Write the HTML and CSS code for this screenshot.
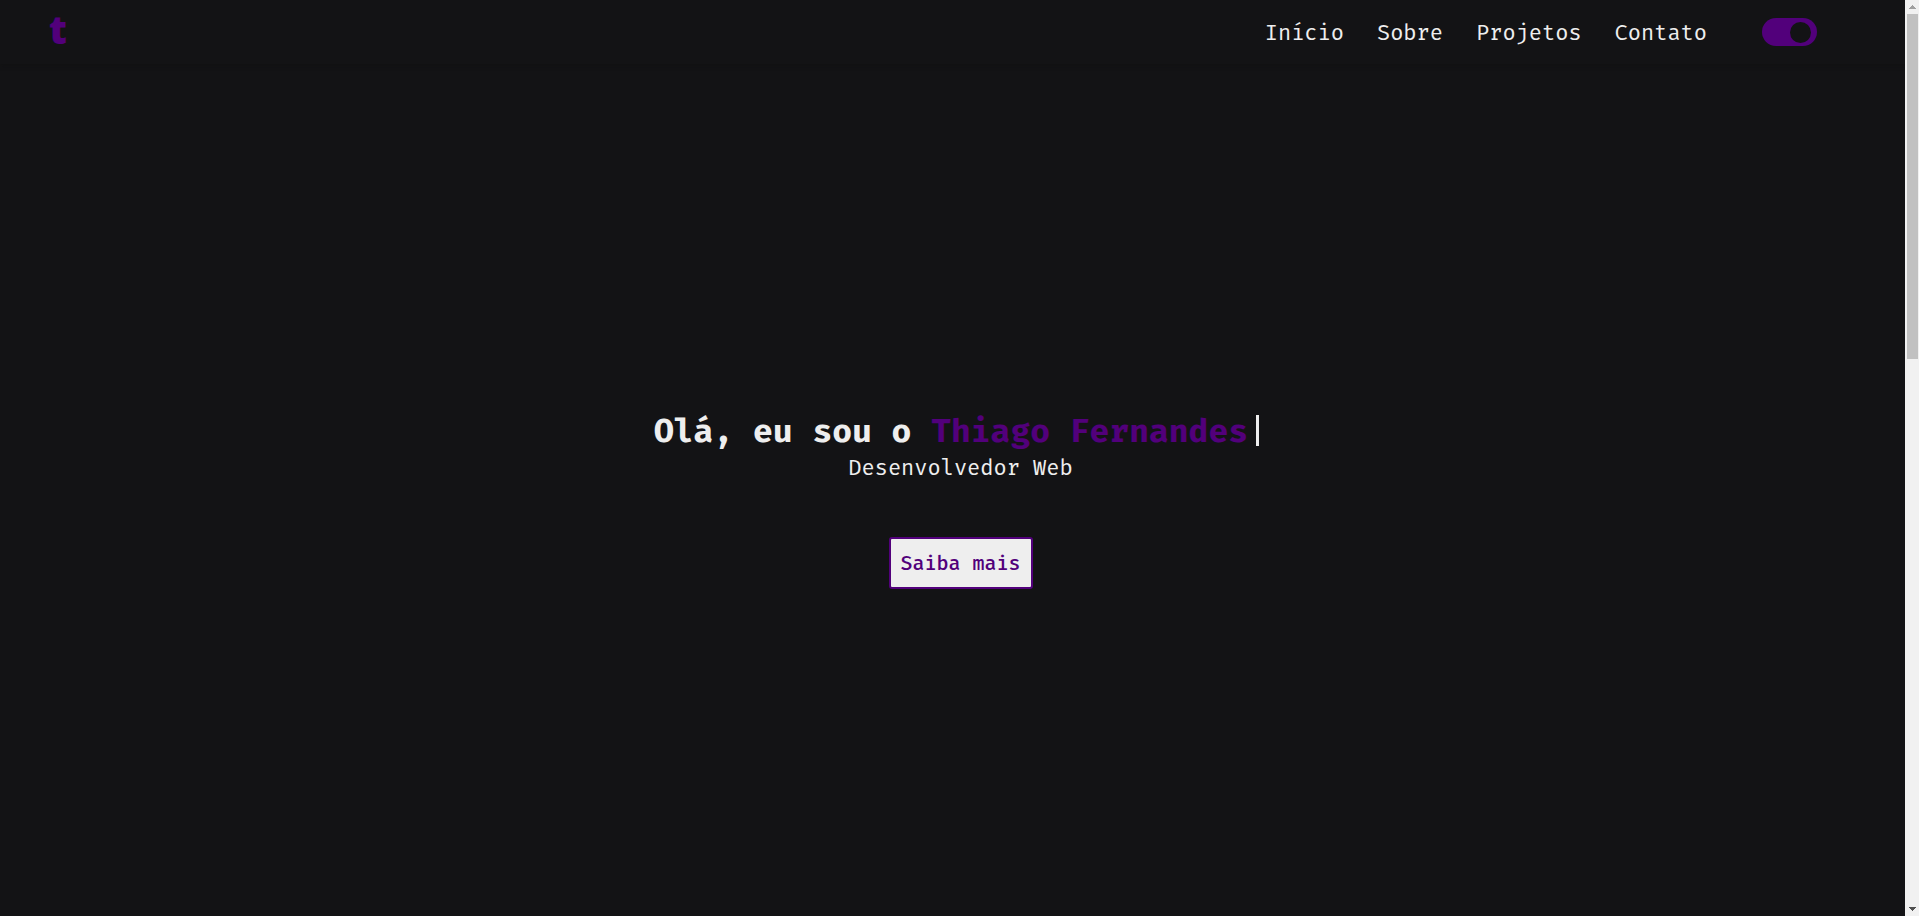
FILE: index.html
```html
<!DOCTYPE html>
<html lang="pt-BR">
<head>
<meta charset="utf-8">
<title>Thiago Fernandes</title>
<link rel="stylesheet" href="styles.css">
</head>
<body>
<header class="navbar">
  <a class="logo" href="#inicio">t</a>
  <nav class="links">
    <a href="#inicio">Início</a>
    <a href="#sobre">Sobre</a>
    <a href="#projetos">Projetos</a>
    <a href="#contato">Contato</a>
  </nav>
  <input class="toggle" type="checkbox" checked aria-label="Tema escuro">
</header>
<main class="hero" id="inicio">
  <h1 class="title"><span>Olá, eu sou o <span class="name">Thiago Fernandes</span></span><span class="cursor"></span></h1>
  <p class="role">Desenvolvedor Web</p>
  <button class="more" type="button">Saiba mais</button>
</main>
<div class="scrollbar" aria-hidden="true">
  <svg class="arrow dim" viewBox="0 0 7 4"><path d="M3 0h1v1h1v1h1v1h1v1H0V3h1V2h1V1h1z"/></svg>
  <div class="thumb"></div>
  <svg class="arrow" viewBox="0 0 7 4"><path d="M0 0h7v1H6v1H5v1H4v1H3V3H2V2H1V1H0z"/></svg>
</div>
</body>
</html>
```
FILE: styles.css
```css
* { box-sizing: border-box; margin: 0; }
body {
  min-height: 100vh;
  display: flex;
  flex-direction: column;
  background: #131315;
  color: #eee;
  font-family: "Fira Mono", "DejaVu Sans Mono", monospace;
  overflow: hidden;
}
a { color: inherit; text-decoration: none; }
.navbar {
  display: flex;
  align-items: center;
  height: 64px;
  padding: 0 102px 0 49px;
  box-shadow: 0 1px 4px #111112;
}
.logo {
  color: #52007b;
  font-family: "Open Sans", sans-serif;
  font-size: 39px;
  line-height: 44px;
  font-weight: 800;
  margin-bottom: 6px;
}
.links {
  display: flex;
  gap: 33px;
  margin: 2px 55px 0 auto;
  font-size: 22px;
  line-height: 30px;
}
.toggle {
  appearance: none;
  display: flex;
  justify-content: flex-end;
  align-items: center;
  width: 55px;
  height: 28px;
  padding: 0 6px;
  border-radius: 14px;
  background: #52007b;
}
.toggle::before {
  content: "";
  width: 21px;
  height: 21px;
  border-radius: 50%;
  background: #131315;
}
.hero {
  flex: 1;
  display: flex;
  flex-direction: column;
  align-items: center;
  justify-content: center;
  padding: 20px 0 0 2px;
}
.title {
  display: flex;
  align-items: center;
  gap: 8px;
  padding-right: 8px;
  font-size: 33px;
  line-height: 40px;
}
.name { color: #52007b; }
.cursor { width: 3px; height: 31px; margin-bottom: 2px; background: #eee; }
.role { font-size: 22px; line-height: 34px; }
.more {
  height: 52px;
  margin-top: 52px;
  padding: 0 10px;
  border: 2px solid #52007b;
  border-radius: 3px;
  background: #eee;
  color: #52007b;
  font: 500 20px/28px "Fira Mono", "DejaVu Sans Mono", monospace;
}
.scrollbar {
  position: fixed;
  top: 0;
  right: 0;
  bottom: 0;
  width: 14px;
  padding: 5px 1px 5px 2px;
  display: flex;
  flex-direction: column;
  align-items: center;
  background: #f1f1f1;
}
.arrow { width: 7px; height: 4px; fill: #505050; flex: none; }
.arrow.dim { fill: #a0a0a0; }
.thumb {
  width: 100%;
  height: 345px;
  margin: 5px 0 auto;
  background: #c1c1c1;
}
```
